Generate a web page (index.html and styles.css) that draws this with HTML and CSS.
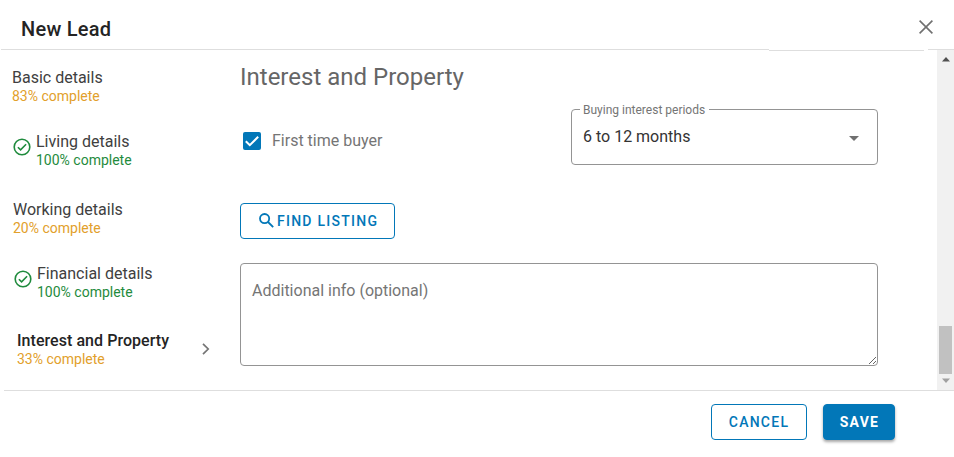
FILE: index.html
```html
<!DOCTYPE html>
<html lang="en">
<head>
    <meta charset="UTF-8">
    <meta name="viewport" content="width=device-width, initial-scale=1.0">
    <title>New Lead</title>
    <link rel="stylesheet" href="styles.css">
</head>
<body>
    <div class="dialog">
        <header class="dialog-header">
            <h1>New Lead</h1>
            <button class="close" type="button" aria-label="Close">
                <svg width="14" height="14" viewBox="0 0 14 14"><path d="M.6.6l12.8 12.8M13.4.6L.6 13.4" fill="none" stroke="#707070" stroke-width="1.6"/></svg>
            </button>
        </header>
        <div class="divider"><span></span><span class="divider-low"></span><span class="divider-end"></span></div>

        <div class="dialog-body">
            <!-- Steps -->
            <nav class="steps">
                <div class="step">
                    <div><div class="step-name">Basic details</div><div class="step-status">83% complete</div></div>
                </div>
                <div class="step done">
                    <svg class="check" width="18" height="18" viewBox="0 0 18 18"><circle cx="9" cy="9" r="7.8"/><path d="M4.9 9.2l2.7 2.7 5.5-5.7"/></svg>
                    <div><div class="step-name">Living details</div><div class="step-status">100% complete</div></div>
                </div>
                <div class="step working">
                    <div><div class="step-name">Working details</div><div class="step-status">20% complete</div></div>
                </div>
                <div class="step done financial">
                    <svg class="check" width="18" height="18" viewBox="0 0 18 18"><circle cx="9" cy="9" r="7.8"/><path d="M4.9 9.2l2.7 2.7 5.5-5.7"/></svg>
                    <div><div class="step-name">Financial details</div><div class="step-status">100% complete</div></div>
                </div>
                <div class="step active">
                    <div><div class="step-name">Interest and Property</div><div class="step-status">33% complete</div></div>
                    <svg class="chevron" width="8" height="12" viewBox="0 0 8 12"><path d="M1 .9L6.2 6 1 11.1" fill="none" stroke="#757575" stroke-width="1.7"/></svg>
                </div>
            </nav>

            <form class="content">
                <h2>Interest and Property</h2>
                <div class="row">
                    <label class="checkbox">
                        <svg width="18" height="18" viewBox="0 0 18 18"><rect width="18" height="18" rx="2" fill="#0277b8"/><path d="M2.8 9.2l4 4 8.4-8.4" fill="none" stroke="#fff" stroke-width="2"/></svg>
                        <span>First time buyer</span>
                    </label>
                    <fieldset class="select">
                        <legend>Buying interest periods</legend>
                        <span>6 to 12 months</span>
                        <svg width="10" height="5" viewBox="0 0 10 5"><path d="M0 0h10L5 5z" fill="#707070"/></svg>
                    </fieldset>
                </div>
                <button class="btn find" type="button">
                    <svg width="15" height="15" viewBox="0 0 15 15"><circle cx="5.6" cy="5.6" r="4.6"/><path d="M9 9l5.2 5.2"/></svg>
                    <span>FIND LISTING</span>
                </button>
                <textarea placeholder="Additional info (optional)"></textarea>
            </form>

            <div class="scrollbar">
                <svg width="8" height="5" viewBox="0 0 8 5"><path d="M0 4.5L4 0l4 4.5z" fill="#505050"/></svg>
                <div class="thumb"></div>
                <svg width="8" height="5" viewBox="0 0 8 5"><path d="M0 .5h8L4 5z" fill="#a0a0a0"/></svg>
            </div>
        </div>

        <footer class="dialog-footer">
            <button class="btn cancel" type="button">CANCEL</button>
            <button class="btn save" type="submit">SAVE</button>
        </footer>
    </div>
</body>
</html>
```
FILE: styles.css
```css
* {
    box-sizing: border-box;
}

body {
    margin: 0;
    background: #fff;
    color: #404040;
    font-family: Roboto, "Liberation Sans", sans-serif;
    font-size: 16px;
    overflow: hidden;
}

h1, h2 {
    margin: 0;
}

svg {
    display: block;
    flex: none;
}

.dialog {
    width: 954px;
    height: 457px;
    display: flex;
    flex-direction: column;
}

.dialog-header {
    height: 49px;
    padding: 9px 21px 0 21px;
    display: flex;
    align-items: center;
    justify-content: space-between;
}

.dialog-header h1 {
    color: #242424;
    font-size: 20px;
    font-weight: 500;
    line-height: 24px;
    letter-spacing: 0.25px;
}

.close {
    margin-bottom: 4px;
    padding: 0;
    border: none;
    background: none;
}

.divider {
    height: 2px;
    margin: 0 0 -1px 1px;
    display: grid;
    grid-template-columns: 768px 155px 26px;
}

.divider span {
    height: 1px;
    background: #dedede;
}

.divider .divider-low {
    margin-top: 1px;
}

.divider .divider-end {
    margin: 0 -4px 0 4px;
}

.dialog-body {
    height: 340px;
    display: flex;
}

/* Steps */
.steps {
    width: 240px;
    padding: 18px 0 0 12px;
}

.step {
    height: 64px;
    display: flex;
    align-items: flex-start;
}

.step-name {
    line-height: 20px;
}

.step-status {
    margin-top: -1px;
    color: #e2a02b;
    font-size: 14px;
    line-height: 18px;
}

.done {
    height: 68px;
}

.done .step-status {
    color: #1f8b3d;
}

.check {
    margin: 6px 5px 0 1px;
    fill: none;
    stroke: #1f8b3d;
    stroke-width: 1.6;
}

.working,
.financial {
    padding-left: 1px;
}

.financial {
    height: 67px;
}

.active {
    padding-left: 5px;
}

.active .step-name {
    color: #242424;
    font-weight: 500;
    letter-spacing: 0.05px;
}

.chevron {
    margin: 12px 0 0 33px;
}

/* Form */
.content {
    width: 638px;
}

.content h2 {
    margin-top: 11px;
    color: #666;
    font-size: 24px;
    font-weight: 400;
    line-height: 32px;
}

.row {
    height: 73px;
    margin-top: 9px;
    display: flex;
    justify-content: space-between;
}

.checkbox {
    height: 20px;
    margin: 29px 0 0 3px;
    display: flex;
    align-items: center;
    gap: 11px;
    color: #757575;
}

.checkbox span {
    margin-top: -2px;
}

.select {
    width: 307px;
    height: 63px;
    margin: 0;
    padding: 11px 18px 18px 11px;
    border: 1px solid #949494;
    border-radius: 4px;
    display: flex;
    align-items: center;
    justify-content: space-between;
    color: #333;
}

.select svg {
    margin-top: 4px;
}

.select legend {
    height: 14px;
    margin-left: -3px;
    padding: 0 4px 0 3px;
    color: #757575;
    font-size: 12px;
    line-height: 16px;
}

.btn {
    height: 36px;
    padding: 0;
    border: 1px solid #0277b8;
    border-radius: 4px;
    background: #fff;
    color: #0277b8;
    font-family: inherit;
    font-size: 14px;
    font-weight: 500;
    letter-spacing: 1.25px;
}

.find {
    width: 155px;
    margin-top: 28px;
    padding-left: 18px;
    display: flex;
    align-items: center;
    gap: 3px;
}

.find svg {
    margin-bottom: 2px;
    fill: none;
    stroke: #0277b8;
    stroke-width: 1.8;
}

.content textarea {
    width: 638px;
    height: 103px;
    margin-top: 24px;
    padding: 17px 11px;
    display: block;
    border: 1px solid #949494;
    border-radius: 4px;
    outline: none;
    font: inherit;
    line-height: 20px;
}

.content textarea::placeholder {
    color: #757575;
}

.scrollbar {
    width: 17px;
    margin-left: auto;
    padding: 7px 0;
    background: #f1f1f1;
    display: flex;
    flex-direction: column;
    align-items: center;
}

.thumb {
    width: 13px;
    height: 48px;
    margin: auto 0 4px;
    background: #c1c1c1;
}

/* Footer */
.dialog-footer {
    margin-left: 4px;
    padding: 13px 59px 0 0;
    border-top: 1px solid #dedede;
    display: flex;
    justify-content: flex-end;
    gap: 16px;
}

.cancel {
    width: 96px;
}

.save {
    width: 72px;
    padding-left: 1px;
    background: #0277b8;
    color: #fff;
    font-weight: 700;
    box-shadow: 0 2px 3px rgba(0, 0, 0, 0.35);
}
```
